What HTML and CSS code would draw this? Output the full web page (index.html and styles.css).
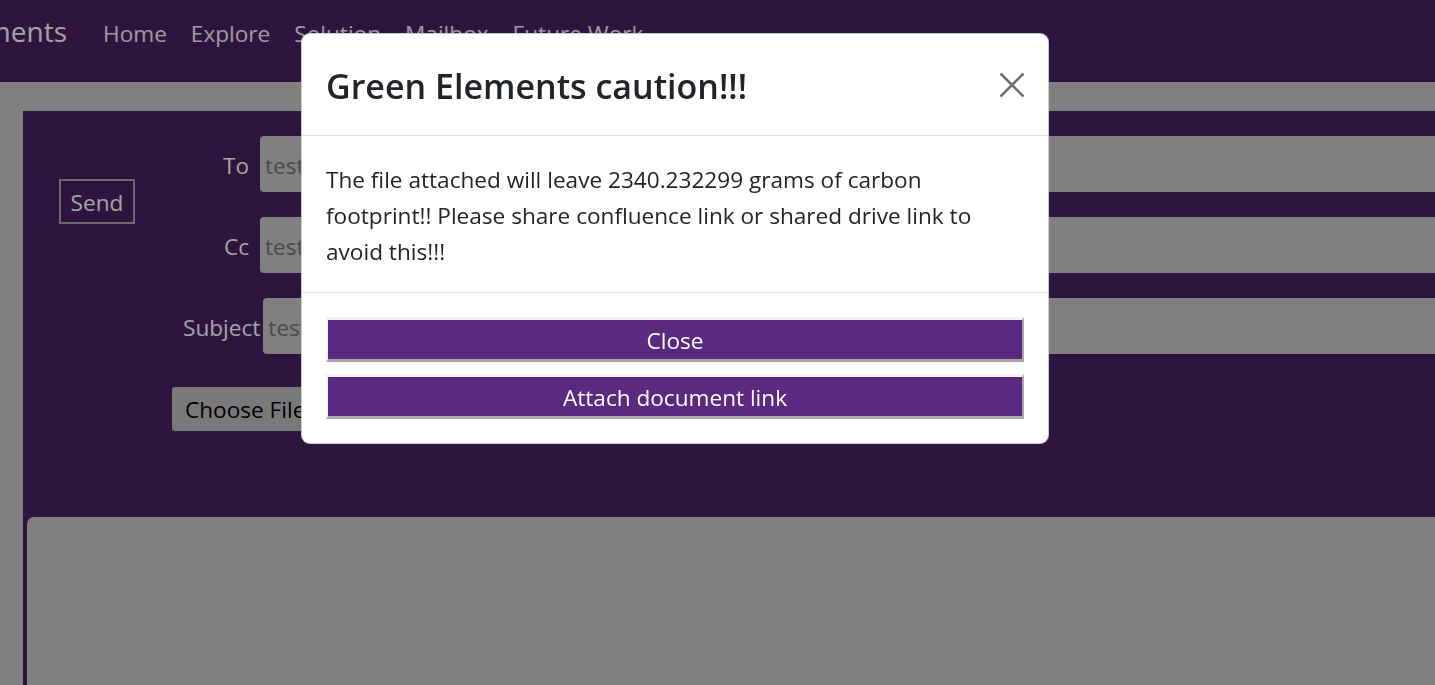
FILE: index.html
```html
<!DOCTYPE html>
<html lang="en">
<head>
<meta charset="utf-8">
<title>Green Elements - Mailbox</title>
<link rel="stylesheet" href="styles.css">
</head>
<body>
<nav class="navbar">
  <a class="brand" href="#">Green Elements</a>
  <ul class="nav-links">
    <li><a href="#">Home</a></li>
    <li><a href="#">Explore</a></li>
    <li><a href="#">Solution</a></li>
    <li><a href="#">Mailbox</a></li>
    <li><a href="#">Future Work</a></li>
  </ul>
</nav>

<main class="compose">
  <div class="compose-top">
    <div class="send-col">
      <button class="send-btn" type="button">Send</button>
    </div>
    <form class="fields">
      <div class="field">
        <label class="field-label">To</label>
        <input class="field-input" type="text" value="test">
      </div>
      <div class="field">
        <label class="field-label">Cc</label>
        <input class="field-input" type="text" value="test">
      </div>
      <div class="field">
        <label class="field-label field-label--wide">Subject</label>
        <input class="field-input" type="text" value="test">
      </div>
      <div class="file-row">
        <span class="file-btn">Choose File</span>
        <span class="file-name">No file chosen</span>
      </div>
    </form>
  </div>
  <textarea class="body-box"></textarea>
</main>

<div class="backdrop">
  <div class="modal">
    <div class="modal-header">
      <h4 class="modal-title">Green Elements caution!!!</h4>
      <button class="btn-close" type="button" aria-label="Close">
        <svg viewBox="0 0 26 26" width="26" height="26"><path d="M1.5 1.5 L24.5 24.5 M24.5 1.5 L1.5 24.5" stroke="#6f6f6f" stroke-width="2.6" fill="none"/></svg>
      </button>
    </div>
    <div class="modal-body">
      The file attached will leave 2340.232299 grams of carbon footprint!! Please share confluence link or shared drive link to avoid this!!!
    </div>
    <div class="modal-footer">
      <button class="modal-btn" type="button">Close</button>
      <button class="modal-btn" type="button">Attach document link</button>
    </div>
  </div>
</div>
</body>
</html>
```

FILE: styles.css
```css
* { box-sizing: border-box; }

html, body {
  margin: 0;
  height: 100%;
  overflow: hidden;
}

body {
  background: #c8c8c8;
  font-family: "Open Sans", "Noto Sans", sans-serif;
  font-size: 22.6px;
  color: #212529;
}

/* ---------- navbar ---------- */
.navbar {
  height: 82px;
  background: #482164;
  display: flex;
  align-items: baseline;
  padding-top: 13px;
}

.brand {
  width: 67px;
  direction: rtl;
  overflow: hidden;
  white-space: nowrap;
  color: #fff;
  text-decoration: none;
  font-size: 28px;
  line-height: 36px;
  margin-right: 24px;
}

.nav-links {
  display: flex;
  list-style: none;
  margin: 0;
  padding: 0;
}

.nav-links a {
  display: block;
  padding: 0 12px;
  line-height: 36px;
  color: #f6f2fa;
  text-decoration: none;
}

/* ---------- compose panel ---------- */
.compose {
  margin: 29px -80px 0 23px;
  background: #482164;
  padding-top: 25px;
  height: 700px;
}

.compose-top {
  display: flex;
}

.send-col {
  width: 149px;
  flex-shrink: 0;
  padding: 43px 0 0 36px;
}

.send-btn {
  width: 76px;
  height: 45px;
  background: transparent;
  border: 2px solid #aca6b2;
  color: #fff;
  font: inherit;
  padding: 1px 0 0;
  line-height: 39px;
}

.fields {
  flex: 1;
  margin: 0;
}

.field {
  display: flex;
  align-items: center;
  height: 56px;
  margin-bottom: 25px;
}

.field-label {
  min-width: 66px;
  margin-left: 11px;
  margin-right: 11px;
  text-align: right;
  color: #fff;
  white-space: nowrap;
  padding-top: 2px;
}

.field-label--wide {
  margin-right: 3px;
}

.field-input {
  flex: 1;
  height: 56px;
  border: none;
  border-radius: 4px;
  background: #c8c8c8;
  color: #747474;
  font: inherit;
  padding: 2px 5px 0;
  outline: none;
}

.file-row {
  display: flex;
  align-items: center;
  margin-top: 33px;
  gap: 10px;
}

.file-btn {
  height: 44px;
  line-height: 46px;
  padding: 0 13px;
  background: #bebebe;
  border-radius: 3px;
  color: #000;
  white-space: nowrap;
}

.file-name {
  color: #fff;
  white-space: nowrap;
}

.body-box {
  display: block;
  margin: 86px 0 0 4px;
  width: calc(100% - 4px);
  height: 400px;
  border: none;
  border-radius: 7px;
  background: #c8c8c8;
  resize: none;
}

/* ---------- modal ---------- */
.backdrop {
  position: fixed;
  inset: 0;
  background: rgba(0, 0, 0, 0.36);
}

.modal {
  width: 748px;
  margin: 33px 0 0 301px;
  background: #fff;
  border: 1px solid rgba(0, 0, 0, 0.2);
  border-radius: 9px;
}

.modal-header {
  display: flex;
  align-items: center;
  justify-content: space-between;
  padding: 24px;
  border-bottom: 1px solid #dee2e6;
}

.modal-title {
  margin: 0;
  font-size: 34px;
  font-weight: 600;
  line-height: 53px;
  padding-top: 2px;
  margin-bottom: -2px;
  color: #212529;
}

.btn-close {
  display: flex;
  background: none;
  border: none;
  padding: 0;
  margin-right: -1px;
  cursor: pointer;
}

.modal-body {
  padding: 26px 24px 22px;
  line-height: 36px;
  color: #212529;
}

.modal-footer {
  display: flex;
  flex-direction: column;
  gap: 12px;
  padding: 24px;
  border-top: 1px solid #dee2e6;
}

.modal-btn {
  width: 100%;
  height: 45px;
  padding: 2px 6px 0;
  background: #5b2a80;
  color: #fff;
  font: inherit;
  line-height: 37px;
  border-style: solid;
  border-width: 3px 2px;
  border-color: #f2f2f2 #a9a9a9 #a9a9a9 #f2f2f2;
}
```
